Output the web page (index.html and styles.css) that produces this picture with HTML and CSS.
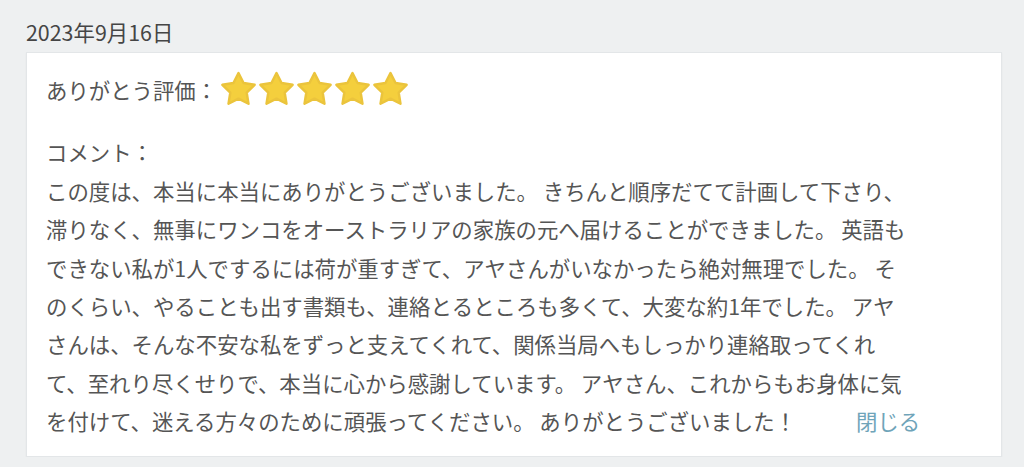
FILE: index.html
```html
<!DOCTYPE html>
<html lang="ja">
<head>
<meta charset="utf-8">
<link rel="stylesheet" href="styles.css">
</head>
<body>
<div class="page">
  <div class="date">2023年9月16日</div>
  <div class="card">
    <div class="rating">
      <span class="label">ありがとう評価：</span>
      <span class="stars">
        <svg class="star" viewBox="0 -1 24 24"><path d="M12 1L15.29 7.47L22.46 8.6L17.33 13.73L18.47 20.9L12 17.6L5.53 20.9L6.67 13.73L1.54 8.6L8.71 7.47Z"/></svg>
        <svg class="star" viewBox="0 -1 24 24"><path d="M12 1L15.29 7.47L22.46 8.6L17.33 13.73L18.47 20.9L12 17.6L5.53 20.9L6.67 13.73L1.54 8.6L8.71 7.47Z"/></svg>
        <svg class="star" viewBox="0 -1 24 24"><path d="M12 1L15.29 7.47L22.46 8.6L17.33 13.73L18.47 20.9L12 17.6L5.53 20.9L6.67 13.73L1.54 8.6L8.71 7.47Z"/></svg>
        <svg class="star" viewBox="0 -1 24 24"><path d="M12 1L15.29 7.47L22.46 8.6L17.33 13.73L18.47 20.9L12 17.6L5.53 20.9L6.67 13.73L1.54 8.6L8.71 7.47Z"/></svg>
        <svg class="star" viewBox="0 -1 24 24"><path d="M12 1L15.29 7.47L22.46 8.6L17.33 13.73L18.47 20.9L12 17.6L5.53 20.9L6.67 13.73L1.54 8.6L8.71 7.47Z"/></svg>
      </span>
    </div>
    <div class="comment">
      <div class="comment-label">コメント：</div>
      <p class="comment-body">この度は、本当に本当にありがとうございました。 きちんと順序だてて計画して下さり、滞りなく、無事にワンコをオーストラリアの家族の元へ届けることができました。 英語もできない私が1人でするには荷が重すぎて、アヤさんがいなかったら絶対無理でした。 そのくらい、やることも出す書類も、連絡とるところも多くて、大変な約1年でした。 アヤさんは、そんな不安な私をずっと支えてくれて、関係当局へもしっかり連絡取ってくれて、至れり尽くせりで、本当に心から感謝しています。 アヤさん、これからもお身体に気を付けて、迷える方々のために頑張ってください。 ありがとうございました！<a class="close" href="#">閉じる</a></p>
    </div>
  </div>
</div>
</body>
</html>
```

FILE: styles.css
```css
html, body {
  margin: 0;
  padding: 0;
  background: #eef0f1;
}
body {
  font-family: "Noto Sans CJK JP", "Noto Sans", sans-serif;
  font-size: 21.4px;
  color: #555;
}
.page {
  padding: 17px 22px 0 26px;
}
.date {
  line-height: 30px;
  color: #454545;
  margin-bottom: 5px;
}
.card {
  background: #fff;
  border: 1px solid #e3e6e8;
  box-shadow: 0 1px 2px rgba(0,0,0,0.04);
  padding: 18px 20px 15px 19px;
}
.rating {
  display: flex;
  align-items: center;
  height: 38.4px;
}
.label {
  line-height: 38.4px;
}
.stars {
  display: flex;
  gap: 1px;
  margin-left: 3px;
  margin-top: -3px;
}
.star {
  width: 37px;
  height: 37px;
  fill: #f4cf3d;
  stroke: #ebc43c;
  stroke-width: 1.6;
  stroke-linejoin: round;
}
.comment {
  margin-top: 24px;
}
.comment-label {
  line-height: 38.4px;
}
.comment-body {
  margin: 0;
  width: 868px;
  line-height: 38.4px;
}
.close {
  color: #6fa4b9;
  text-decoration: none;
  white-space: nowrap;
  margin-left: 60px;
  margin-right: -80px;
}
```
